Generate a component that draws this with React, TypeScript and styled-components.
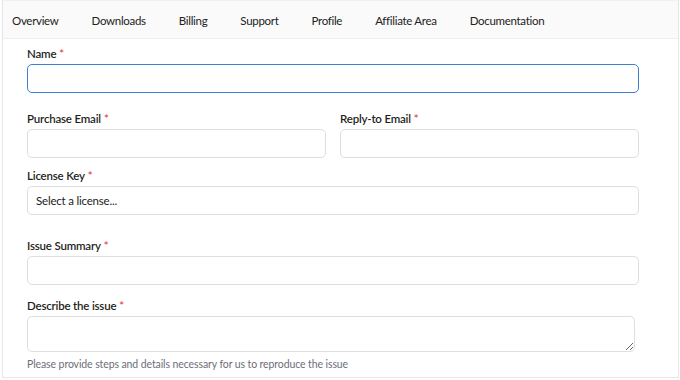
import React from "react";
import styled, { createGlobalStyle } from "styled-components";

const GlobalStyle = createGlobalStyle`
  html, body {
    margin: 0;
    padding: 0;
    background: #ffffff;
  }
  body {
    font-family: "Lato", "Liberation Sans", sans-serif;
    color: #1d1d1f;
  }
`;

const Page = styled.div`
  padding: 0 1px 0 2px;
`;

const Panel = styled.div`
  border: 1px solid #e6e6e8;
  border-top: none;
  height: 378px;
  box-sizing: border-box;
  display: flex;
  flex-direction: column;
`;

const Nav = styled.nav`
  flex-shrink: 0;
  box-sizing: border-box;
  display: flex;
  align-items: center;
  gap: 33px;
  height: 39px;
  padding: 2px 0 0 9px;
  background: #fafafa;
  border-bottom: 1px solid #efeff1;
  border-top: 1px solid #f1f1f3;
`;

const NavItem = styled.a`
  font-size: 11.5px;
  letter-spacing: -0.3px;
  color: #222;
  text-decoration: none;
  white-space: nowrap;
`;

const Form = styled.form`
  padding: 0 39px 0 24px;
  display: flex;
  flex-direction: column;
`;

const Row = styled.div`
  display: grid;
  grid-template-columns: 1fr 1fr;
  gap: 14px;
`;

const Field = styled.div<{ $top: number }>`
  display: flex;
  flex-direction: column;
  margin-top: ${(p) => p.$top}px;
`;

const Label = styled.label`
  font-size: 11.5px;
  letter-spacing: -0.2px;
  font-weight: 600;
  color: #1f1f22;
  height: 14px;
  line-height: 14px;
  margin-bottom: 3px;
`;

const Star = styled.span`
  color: #e5484d;
  margin-left: 3px;
`;

const Input = styled.input<{ $focus?: boolean }>`
  box-sizing: border-box;
  height: 29px;
  width: 100%;
  border: ${(p) => (p.$focus ? "1.5px solid #3b7fd0" : "1px solid #dedee2")};
  border-radius: 5px;
  background: #fff;
  font-family: inherit;
  font-size: 12px;
  padding: 0 9px;
  outline: none;
`;

const Select = styled.div`
  box-sizing: border-box;
  height: 29px;
  border: 1px solid #dedee2;
  border-radius: 5px;
  display: flex;
  align-items: center;
  padding: 0 8px;
  font-size: 11.5px;
  letter-spacing: -0.2px;
  color: #222;
`;

const TextArea = styled.textarea`
  box-sizing: border-box;
  height: 36px;
  width: calc(100% - 4px);
  border: 1px solid #dedee2;
  border-radius: 5px;
  font-family: inherit;
  font-size: 12px;
  outline: none;
  resize: vertical;
`;

const Help = styled.div`
  font-size: 10.5px;
  letter-spacing: -0.1px;
  line-height: 13px;
  color: #6e6e78;
  margin-top: 6px;
`;

const tabs = [
  "Overview",
  "Downloads",
  "Billing",
  "Support",
  "Profile",
  "Affiliate Area",
  "Documentation",
];

const Req: React.FC<{ text: string }> = ({ text }) => (
  <Label>
    {text}
    <Star>*</Star>
  </Label>
);

export default function App() {
  return (
    <Page>
      <GlobalStyle />
      <Panel>
        <Nav>
          {tabs.map((t) => (
            <NavItem key={t}>{t}</NavItem>
          ))}
        </Nav>
        <Form>
          <Field $top={8}>
            <Req text="Name" />
            <Input $focus />
          </Field>
          <Row>
            <Field $top={19}>
              <Req text="Purchase Email" />
              <Input />
            </Field>
            <Field $top={19}>
              <Req text="Reply-to Email" />
              <Input />
            </Field>
          </Row>
          <Field $top={11}>
            <Req text="License Key" />
            <Select>Select a license...</Select>
          </Field>
          <Field $top={24}>
            <Req text="Issue Summary" />
            <Input />
          </Field>
          <Field $top={14}>
            <Req text="Describe the issue" />
            <TextArea />
            <Help>
              Please provide steps and details necessary for us to reproduce the
              issue
            </Help>
          </Field>
        </Form>
      </Panel>
    </Page>
  );
}
